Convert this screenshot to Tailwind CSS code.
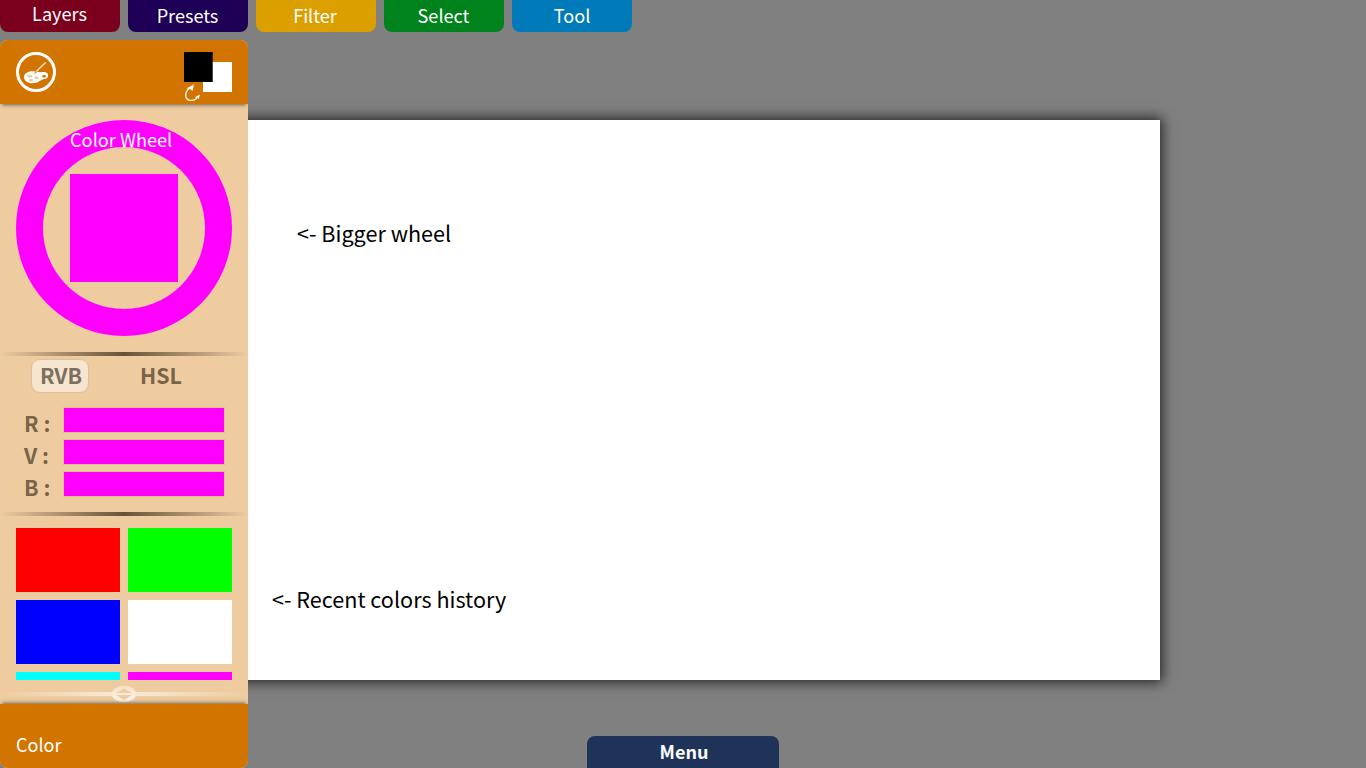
<!DOCTYPE html>
<html lang="en">
<head>
<meta charset="utf-8">
<title>Color panel</title>
<script src="https://cdn.jsdelivr.net/npm/@tailwindcss/browser@4"></script>
</head>
<body class="h-screen overflow-hidden bg-[#808080] font-['Noto_Sans_CJK_SC',sans-serif]">
<div class="flex h-[768px] flex-col">
  <nav class="flex h-8 shrink-0 gap-2 text-[18.1px] text-white">
    <button class="h-8 w-[120px] rounded-b-lg bg-[#7a001e] pr-px pb-1.5 leading-[26px]">Layers</button>
    <button class="h-8 w-[120px] rounded-b-lg bg-[#1f0057] pr-px pb-0.5 leading-[30px]">Presets</button>
    <button class="h-8 w-[120px] rounded-b-lg bg-[#dba000] pr-0.5 pb-0.5 leading-[30px]">Filter</button>
    <button class="h-8 w-[120px] rounded-b-lg bg-[#00821c] pr-px pb-0.5 leading-[30px]">Select</button>
    <button class="h-8 w-[120px] rounded-b-lg bg-[#007ab8] pb-0.5 leading-[30px]">Tool</button>
  </nav>
  <main class="flex flex-1 pt-2">
    <aside class="z-10 flex h-[728px] w-[248px] shrink-0 flex-col overflow-hidden rounded-lg bg-[#eecca0]">
      <header class="flex h-16 shrink-0 justify-between bg-[#d27400] pt-3 pr-4 pl-4 shadow-[0_3px_4px_-2px_rgba(0,0,0,0.55)]">
        <svg class="h-10 w-10" viewBox="0 0 40 40">
          <circle cx="20" cy="20" r="18.5" fill="none" stroke="#fff" stroke-width="3"/>
          <path fill="#fff" fill-rule="evenodd" d="M8 25C8 21 13 19 18 19.3C21 19.5 23 20.5 27 20C31 19.5 33 22 31.8 25C30.8 27.5 28 26.5 25.5 28C22 30.5 18 32 13.5 31C10 30 8 28 8 25ZM26.2 24.3A1.9 1.3 0 1 0 30 24.3A1.9 1.3 0 1 0 26.2 24.3Z"/>
          <g fill="#efcb9f"><ellipse cx="13.8" cy="24.2" rx="2.4" ry="1.4"/><ellipse cx="20.5" cy="25.8" rx="2.3" ry="1.4"/><ellipse cx="15" cy="28.2" rx="2.3" ry="1.3"/></g>
          <path d="M18 22.5L19.6 18.6L21.6 19.8Z" fill="#d98a2c"/>
          <path d="M20.8 19L29.3 10.8" stroke="#f8e4cc" stroke-width="1.4" stroke-linecap="round"/>
        </svg>
        <svg class="h-[50px] w-12" viewBox="0 0 48 50">
          <path fill="#fff" d="M19 10H48V40H19Z"/><path d="M0 0H28.7V30H0Z"/>
          <path d="M6 36C0.5 39.5 0.3 47 5.5 48.2C9 48.8 12.2 47.5 13.4 44.8" fill="none" stroke="#fff" stroke-width="1.3"/>
          <path fill="#fff" d="M9.9 32.5L8.6 39L6.6 37.2L2.6 36.6ZM15.9 42.6L14.8 47L13.2 45.6L10.9 45.3Z"/>
        </svg>
      </header>
      <section class="h-[248px] shrink-0 px-4 pt-4">
        <div class="grid h-[216px] w-[216px] grid-cols-1 grid-rows-1 rounded-full border-[27px] border-[#f0f]">
          <div class="col-start-1 row-start-1 m-[27px] h-[108px] w-[108px] bg-[#f0f]"></div>
          <span class="z-10 col-start-1 row-start-1 -mt-[22px] ml-[27px] h-7 text-[18.2px] leading-7 whitespace-nowrap text-white">Color Wheel</span>
        </div>
      </section>
      <div class="h-1 shrink-0 bg-linear-to-r from-transparent via-[#675139] to-transparent"></div>
      <section class="h-[156px] shrink-0 pt-1 font-bold text-[#77644b]">
        <div class="flex h-8 text-[21.4px]">
          <button class="ml-8 h-8 w-14 rounded-lg bg-[#f7e5cf] pb-0.5 pl-0.5 leading-[30px] text-[#7b7060] shadow-[0_0_0_1px_#dbc0a1]">RVB</button>
          <button class="ml-[52px] h-8 pb-0.5 leading-[30px]">HSL</button>
        </div>
        <div class="mt-4 flex flex-col gap-2 text-[21.4px]">
          <div class="flex h-6"><span class="w-16 pl-6 leading-[30px]">R :</span><i class="h-6 w-40 bg-[#f0f] shadow-[0_0_0_1px_rgba(130,100,60,0.12)]"></i></div>
          <div class="flex h-6"><span class="w-16 pl-6 leading-[30px]">V :</span><i class="h-6 w-40 bg-[#f0f] shadow-[0_0_0_1px_rgba(130,100,60,0.12)]"></i></div>
          <div class="flex h-6"><span class="w-16 pl-6 leading-[30px]">B :</span><i class="h-6 w-40 bg-[#f0f] shadow-[0_0_0_1px_rgba(130,100,60,0.12)]"></i></div>
        </div>
      </section>
      <div class="h-1 shrink-0 bg-linear-to-r from-transparent via-[#675139] to-transparent"></div>
      <section class="mx-4 mt-3 grid h-[152px] shrink-0 auto-rows-[64px] grid-cols-2 gap-2 overflow-hidden">
        <div class="bg-[#f00]"></div><div class="bg-[#0f0]"></div>
        <div class="bg-[#00f]"></div><div class="bg-white"></div>
        <div class="bg-[#0ff]"></div><div class="bg-[#f0f]"></div>
      </section>
      <svg class="h-6 w-[248px] shrink-0" viewBox="0 0 248 24">
        <defs>
          <linearGradient id="line" x1="0" x2="1" y1="0" y2="0"><stop offset="0" stop-color="#fff" stop-opacity="0"/><stop offset=".5" stop-color="#fff" stop-opacity=".62"/><stop offset="1" stop-color="#fff" stop-opacity="0"/></linearGradient>
          <linearGradient id="knob" x1="0" x2="0" y1="0" y2="1"><stop offset="0" stop-color="#f5dfc4"/><stop offset="1" stop-color="#fdf7ef"/></linearGradient>
        </defs>
        <path fill="url(#line)" d="M0 12H248V16H0Z"/>
        <ellipse cx="124" cy="14" rx="12" ry="8.3" fill="url(#knob)"/>
        <path fill="#eecca0" d="M116.3 13L124 8.4L131.7 13ZM116.3 15H131.7L124 20Z"/>
      </svg>
      <footer class="h-16 shrink-0 bg-[#d27400] pt-[26px] pl-4 text-[18px] leading-7 text-white shadow-[0_-3px_4px_-2px_rgba(0,0,0,0.55)]">Color</footer>
    </aside>
    <div class="-ml-[42px] flex flex-col pt-20">
      <article class="h-[560px] w-[954px] bg-white text-[21.6px] leading-8 text-black shadow-[0_0_12px_2px_rgba(0,0,0,0.75)]">
        <p class="pt-[97px] pl-[91px]">&lt;- Bigger wheel</p>
        <p class="mt-[334px] pl-[66px]">&lt;- Recent colors history</p>
      </article>
      <button class="mt-14 ml-[381px] h-8 w-48 rounded-t-lg bg-[#1f3359] pb-0.5 pl-0.5 text-[18px] leading-[30px] font-bold text-white">Menu</button>
    </div>
  </main>
</div>
</body>
</html>
